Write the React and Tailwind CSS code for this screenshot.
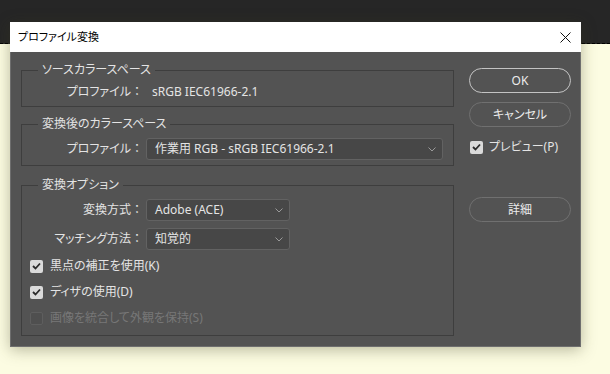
import React from "react";

const FONT = "font-['Noto_Sans','Noto_Sans_CJK_JP',sans-serif] [font-feature-settings:'palt']";

const Chevron = () => (
  <svg width="8" height="5" viewBox="0 0 8 5" className="shrink-0">
    <polyline points="0.5,0.5 4,4 7.5,0.5" fill="none" stroke="#9a9a9a" strokeWidth="1" />
  </svg>
);

const Select = ({ value, width }) => (
  <div
    className={`flex h-[22px] items-center justify-between rounded-[3px] border border-[#626262] bg-[#474747] pl-[8px] pr-[6px] text-[#e4e4e4] ${width}`}
  >
    <span className="leading-none">{value}</span>
    <Chevron />
  </div>
);

const CheckBox = ({ checked, disabled }) => (
  <span
    className={`flex h-[13px] w-[13px] items-center justify-center rounded-[2px] ${
      disabled ? "border border-[#5e5e5e] bg-[#4f4f4f]" : "bg-[#dadada]"
    }`}
  >
    {checked && (
      <svg width="9" height="8" viewBox="0 0 9 8">
        <polyline points="1,4 3.5,6.5 8,1.5" fill="none" stroke="#2a2a2a" strokeWidth="1.8" />
      </svg>
    )}
  </span>
);

const Check = ({ label, checked, disabled }) => (
  <div className="flex h-[18px] items-center gap-[7px] pl-[8px]">
    <CheckBox checked={checked} disabled={disabled} />
    <span className={disabled ? "text-[#777]" : "text-[#e4e4e4]"}>{label}</span>
  </div>
);

const Group = ({ title, className, children }) => (
  <fieldset className={`border border-[#3e3e3e] ${className}`}>
    <legend className="ml-[16px] px-[4px] leading-[18px] text-[#e4e4e4]">{title}</legend>
    {children}
  </fieldset>
);

// colon keeps its full width, like the original dialog font
const Label = ({ children }) => (
  <span className="w-[121px] shrink-0 text-right text-[#e4e4e4]">
    {children}
    <span className="[font-feature-settings:normal]">：</span>
  </span>
);

const PillButton = ({ children, primary, className }) => (
  <button
    className={`flex h-[25px] w-[102px] items-center justify-center rounded-full text-[#ececec] ${
      primary ? "border-[1.5px] border-[#c4c4c4]" : "border border-[#707070]"
    } ${className}`}
  >
    {children}
  </button>
);

export default function App() {
  return (
    <div className={`relative h-[374px] w-[610px] overflow-hidden bg-[#fcfce2] text-[12px] ${FONT}`}>
      {/* desktop strip */}
      <div className="h-[44px] border-b border-dashed border-black bg-[#262626]" />

      {/* dialog window */}
      <div className="absolute left-[10px] top-[22px] w-[571px] shadow-[0_3px_14px_rgba(60,60,30,0.35)]">
        <div className="flex h-[30px] items-center justify-between bg-white pl-[8px] pr-[10px]">
          <span className="text-[11px] text-black">プロファイル変換</span>
          <svg width="11" height="11" viewBox="0 0 11 11">
            <line x1="0.5" y1="0.5" x2="10.5" y2="10.5" stroke="#111" strokeWidth="1" />
            <line x1="10.5" y1="0.5" x2="0.5" y2="10.5" stroke="#111" strokeWidth="1" />
          </svg>
        </div>

        <div className="flex h-[295px] gap-[15px] border-x border-b border-[#6e6e6e] bg-[#535353] pl-[10px] pr-[9px] pt-[9px]">
          {/* left column */}
          <div className="w-[433px]">
            <Group title="ソースカラースペース" className="pb-[5px]">
              <div className="mt-[4px] flex h-[18px] items-center">
                <Label>プロファイル</Label>
                <span className="ml-[9px] text-[#e4e4e4]">sRGB IEC61966-2.1</span>
              </div>
            </Group>

            <Group title="変換後のカラースペース" className="mt-[8px] pb-[5px]">
              <div className="mt-[5px] flex items-center gap-[3px]">
                <Label>プロファイル</Label>
                <Select value="作業用 RGB - sRGB IEC61966-2.1" width="w-[297px]" />
              </div>
            </Group>

            <Group title="変換オプション" className="mt-[10px] pb-[8px]">
              <div className="mt-[5px] flex items-center gap-[3px]">
                <Label>変換方式</Label>
                <Select value="Adobe (ACE)" width="w-[144px]" />
              </div>
              <div className="mt-[7px] flex items-center gap-[3px]">
                <Label>マッチング方法</Label>
                <Select value="知覚的" width="w-[144px]" />
              </div>
              <div className="mt-[7px] flex flex-col gap-[8px]">
                <Check label="黒点の補正を使用(K)" checked />
                <Check label="ディザの使用(D)" checked />
                <Check label="画像を統合して外観を保持(S)" disabled />
              </div>
            </Group>
          </div>

          {/* right column */}
          <div className="flex w-[102px] flex-col pt-[7px]">
            <PillButton primary>OK</PillButton>
            <PillButton className="mt-[9px]">キャンセル</PillButton>
            <div className="mt-[11px] flex h-[18px] items-center gap-[6px] pl-[1px]">
              <CheckBox checked />
              <span className="text-[#e4e4e4]">プレビュー(P)</span>
            </div>
            <PillButton className="mt-[41px]">詳細</PillButton>
          </div>
        </div>
      </div>
    </div>
  );
}
